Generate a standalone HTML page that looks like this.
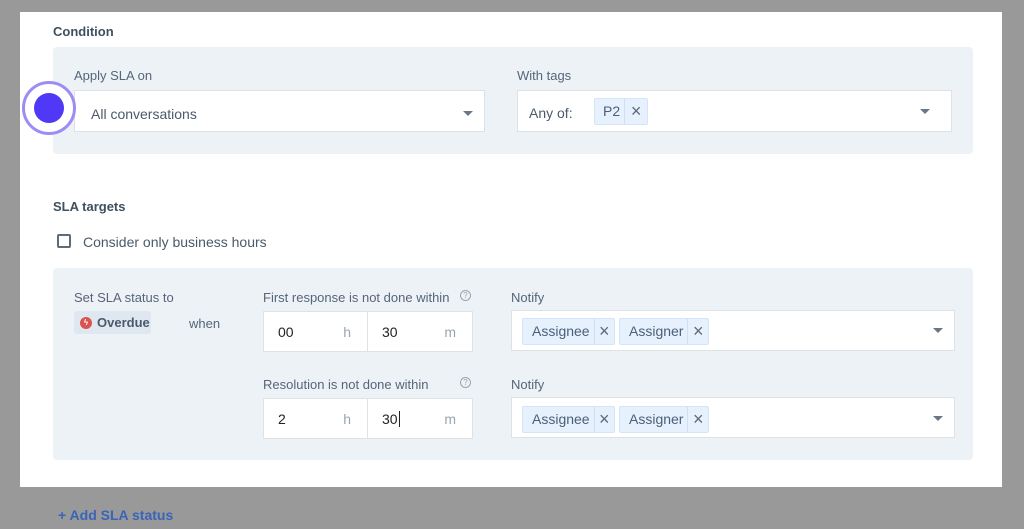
<!DOCTYPE html>
<html><head><style>
*{box-sizing:border-box;margin:0;padding:0}
body{width:1024px;height:529px;background:#999;position:relative;overflow:hidden;font-family:"Liberation Sans",sans-serif;color:#4a5a6a}
.a{position:absolute}
.card{left:20px;top:12px;width:982px;height:475px;background:#fff}
.panel{background:#edf2f6;border-radius:4px}
.h{font-size:13px;font-weight:bold;color:#3f5060}
.lbl{font-size:13px;color:#56657a}
.box{background:#fff;border:1px solid #dde2e7}
.caret{width:0;height:0;border-left:5px solid transparent;border-right:5px solid transparent;border-top:5px solid #6b7785}
.tag{background:#e6f1fd;border:1px solid #d3e5fa;border-radius:2px;height:27px;font-size:14px;color:#4a607a;display:flex;align-items:center}
.tag span{padding:0 4px 0 9px;line-height:25px}
.tag b{font-weight:normal;border-left:1px solid #cfe0f5;width:23px;text-align:center;font-size:18px;line-height:25px;color:#5a6a7a}
.inp{font-size:14px;color:#222;display:flex;align-items:center;justify-content:space-between;padding:0 16px 0 14px}
.inp i{font-style:normal;color:#9aa5b0}
</style></head><body>
<div class="a card"></div>
<div class="a h" style="left:53px;top:24px">Condition</div>
<div class="a panel" style="left:53px;top:47px;width:920px;height:107px"></div>
<div class="a lbl" style="left:74px;top:68px">Apply SLA on</div>
<div class="a box" style="left:74px;top:90px;width:411px;height:42px"></div>
<div class="a" style="left:91px;top:106px;font-size:14px;color:#4a5a6a">All conversations</div>
<div class="a caret" style="left:463px;top:111px"></div>
<div class="a" style="left:22px;top:81px;width:54px;height:54px;border-radius:50%;border:3px solid #9e8cf5;background:#fff"></div>
<div class="a" style="left:34px;top:93px;width:30px;height:30px;border-radius:50%;background:#4f38f6"></div>
<div class="a lbl" style="left:517px;top:68px">With tags</div>
<div class="a box" style="left:517px;top:90px;width:435px;height:42px"></div>
<div class="a" style="left:529px;top:105px;font-size:14px;color:#4a5a6a">Any of:</div>
<div class="a tag" style="left:594px;top:98px;height:27px"><span style="padding:0 4px 0 8px">P2</span><b>×</b></div>
<div class="a caret" style="left:920px;top:109px"></div>

<div class="a h" style="left:53px;top:199px">SLA targets</div>
<div class="a" style="left:57px;top:234px;width:14px;height:14px;border:2px solid #5d6b7a;border-radius:2px"></div>
<div class="a" style="left:83px;top:234px;font-size:14px;color:#4a5a6a">Consider only business hours</div>
<div class="a panel" style="left:53px;top:268px;width:920px;height:192px"></div>
<div class="a lbl" style="left:74px;top:290px">Set SLA status to</div>
<div class="a" style="left:74px;top:311px;width:77px;height:23px;background:#dfe8f0;border-radius:3px;font-size:13px;font-weight:bold;color:#4a5a6a;display:flex;align-items:center;padding-left:6px"><span style="display:inline-block;width:12px;height:12px;border-radius:50%;background:#d9534f;color:#fff;font-size:8px;line-height:12px;text-align:center;margin-right:5px">ϟ</span>Overdue</div>
<div class="a lbl" style="left:189px;top:316px">when</div>

<div class="a lbl" style="left:263px;top:290px">First response is not done within</div>
<div class="a" style="left:460px;top:290px;width:11px;height:11px;border:1px solid #9aa5b0;border-radius:50%;font-size:8px;text-align:center;line-height:9px;color:#9aa5b0">?</div>
<div class="a box inp" style="left:263px;top:311px;width:105px;height:41px">00<i>h</i></div>
<div class="a box inp" style="left:367px;top:311px;width:106px;height:41px">30<i>m</i></div>
<div class="a lbl" style="left:263px;top:377px">Resolution is not done within</div>
<div class="a" style="left:460px;top:377px;width:11px;height:11px;border:1px solid #9aa5b0;border-radius:50%;font-size:8px;text-align:center;line-height:9px;color:#9aa5b0">?</div>
<div class="a box inp" style="left:263px;top:398px;width:105px;height:41px">2<i>h</i></div>
<div class="a box inp" style="left:367px;top:398px;width:106px;height:41px"><span>30<span style="border-left:1px solid #222;margin-left:1px"></span></span><i>m</i></div>

<div class="a lbl" style="left:511px;top:290px">Notify</div>
<div class="a box" style="left:511px;top:310px;width:444px;height:41px"></div>
<div class="a tag" style="left:522px;top:318px;width:93px"><span>Assignee</span><b>×</b></div>
<div class="a tag" style="left:619px;top:318px;width:90px"><span>Assigner</span><b>×</b></div>
<div class="a caret" style="left:933px;top:328px"></div>
<div class="a lbl" style="left:511px;top:377px">Notify</div>
<div class="a box" style="left:511px;top:397px;width:444px;height:41px"></div>
<div class="a tag" style="left:522px;top:406px;width:93px"><span>Assignee</span><b>×</b></div>
<div class="a tag" style="left:619px;top:406px;width:90px"><span>Assigner</span><b>×</b></div>
<div class="a caret" style="left:933px;top:416px"></div>

<div class="a" style="left:58px;top:507px;font-size:14px;font-weight:bold;color:#3a64b8">+ Add SLA status</div>
</body></html>
